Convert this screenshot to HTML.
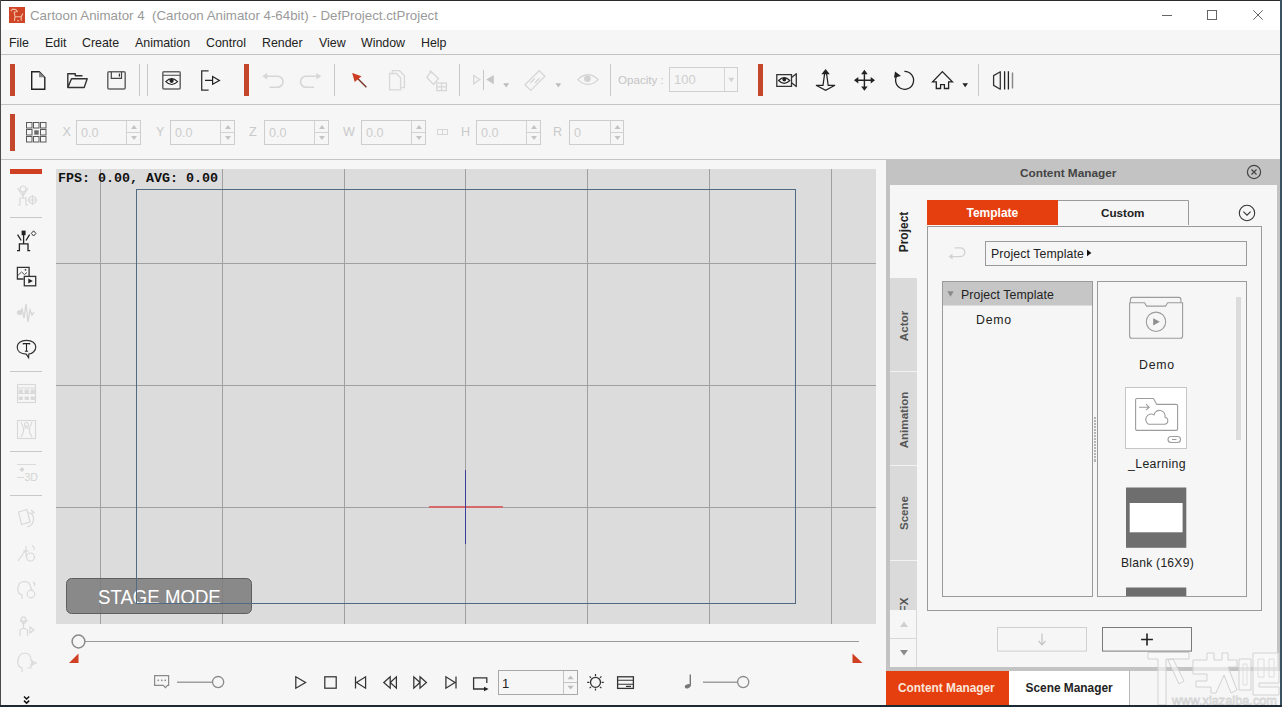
<!DOCTYPE html>
<html><head><meta charset="utf-8">
<style>
*{margin:0;padding:0;box-sizing:border-box}
html,body{width:1282px;height:707px;overflow:hidden}
body{position:relative;background:#f6f6f6;font-family:"Liberation Sans",sans-serif;color:#222}
.a{position:absolute}
.t{position:absolute;white-space:nowrap;line-height:1}
svg{position:absolute;overflow:visible}
.red{position:absolute;background:#c4472b}
.vsep{position:absolute;width:1px;background:#c8c8c8}
.inp{position:absolute;border:1px solid #c9c9c9;background:#f6f6f6}
.inp .d{position:absolute;top:0;bottom:0;width:1px;background:#d2d2d2}
.lbl{position:absolute;color:#c8c8c8;font-size:15px;line-height:1}
.val{position:absolute;color:#c8c8c8;font-size:14px;line-height:1}
</style></head><body>

<!-- ===== TITLE BAR ===== -->
<div class="a" style="left:0;top:0;width:1282px;height:30px;background:#fff"></div>
<div class="a" style="left:9px;top:7px;width:16px;height:16px;background:#cf4526"></div>
<svg style="left:0;top:0" width="30" height="30" viewBox="0 0 30 30"><path d="M10.8 11.2L12.6 9.2L15.8 9.6L17.2 11.4L14.2 12.2L15 16.8H21.2L22.8 13.6M15 16.8L14.4 20.8M21.2 16.8V20.8M17 20.8H19" fill="none" stroke="#f6bfa6" stroke-width="1.1"/></svg>
<div class="t" style="left:30px;top:9px;font-size:13.3px;color:#9a9a9a">Cartoon Animator 4&nbsp; (Cartoon Animator 4-64bit) - DefProject.ctProject</div>
<!-- window controls -->
<div class="a" style="left:1162px;top:15px;width:10px;height:1px;background:#666"></div>
<div class="a" style="left:1207px;top:10px;width:10px;height:10px;border:1px solid #666"></div>
<svg style="left:1253px;top:10px" width="10" height="10" viewBox="0 0 10 10"><path d="M0.3 0.3L9.7 9.7M9.7 0.3L0.3 9.7" stroke="#666" stroke-width="1"/></svg>

<!-- ===== MENU ===== -->
<div class="a" style="left:0;top:30px;width:1282px;height:24px;background:#f6f6f6"></div>
<div class="t" style="left:9px;top:37px;font-size:12.4px;color:#222">File</div>
<div class="t" style="left:45px;top:37px;font-size:12.4px;color:#222">Edit</div>
<div class="t" style="left:82px;top:37px;font-size:12.4px;color:#222">Create</div>
<div class="t" style="left:135px;top:37px;font-size:12.4px;color:#222">Animation</div>
<div class="t" style="left:206px;top:37px;font-size:12.4px;color:#222">Control</div>
<div class="t" style="left:262px;top:37px;font-size:12.4px;color:#222">Render</div>
<div class="t" style="left:319px;top:37px;font-size:12.4px;color:#222">View</div>
<div class="t" style="left:361px;top:37px;font-size:12.4px;color:#222">Window</div>
<div class="t" style="left:421px;top:37px;font-size:12.4px;color:#222">Help</div>
<div class="a" style="left:0;top:54px;width:1282px;height:1px;background:#c4c4c4"></div>

<!-- ===== TOOLBAR 1 ===== -->
<div id="tb1"><svg style="left:0;top:0" width="1282" height="160" viewBox="0 0 1282 160">
<g fill="#c4472b">
<rect x="10" y="64" width="5" height="32"/><rect x="244" y="64" width="5" height="32"/><rect x="758" y="64" width="5" height="32"/>
<rect x="10" y="114" width="5" height="37"/>
</g>
<g fill="#c8c8c8">
<rect x="139" y="64" width="1" height="32"/><rect x="147" y="64" width="1" height="32"/><rect x="334" y="64" width="1" height="32"/>
<rect x="459" y="64" width="1" height="32"/><rect x="610" y="64" width="1" height="32"/><rect x="978" y="64" width="1" height="32"/>
</g>
<!-- new doc -->
<path d="M31.7 71.7H39.2L44.8 77.6V89.3H31.7Z" fill="none" stroke="#222" stroke-width="1.4" stroke-linejoin="miter"/>
<path d="M39 71.7V77.3H44.8Z" fill="#888"/>
<!-- open folder -->
<path d="M71.5 78.8H87.2L84.2 87.5H67.8L71.5 78.8ZM67.8 87.5V73.8H75.3V75.8H82.5" fill="none" stroke="#333" stroke-width="1.4" stroke-linejoin="round"/>
<!-- save -->
<rect x="107.8" y="71.8" width="17.4" height="17.2" rx="1.2" fill="none" stroke="#666" stroke-width="1.5"/>
<path d="M111.3 71.8V78.3H121.5V71.8" fill="none" stroke="#444" stroke-width="1.2"/>
<rect x="118.8" y="73.6" width="1.2" height="3" fill="#333"/>
<!-- preview -->
<rect x="162.8" y="71.8" width="17.4" height="17.3" rx="1" fill="none" stroke="#666" stroke-width="1.5"/>
<line x1="162.8" y1="75.3" x2="180.2" y2="75.3" stroke="#555" stroke-width="1.1"/>
<path d="M165.8 81.6Q171.6 75.8 177.6 81.6Q171.6 87.4 165.8 81.6Z" fill="none" stroke="#222" stroke-width="1.1"/>
<circle cx="171.6" cy="80.8" r="2.1" fill="#222"/>
<!-- export -->
<path d="M208.6 70.8H201.7V90.2H208.6" fill="none" stroke="#333" stroke-width="1.3"/>
<path d="M205 80.4H212.6M212.6 76.6L219.4 80.4L212.6 84.2Z" fill="none" stroke="#222" stroke-width="1.2" stroke-linejoin="miter"/>
<!-- undo / redo -->
<g fill="none" stroke="#d6d6d6" stroke-width="1.6">
<path d="M264 76.2H277.5A5.5 5.5 0 0 1 277.5 87.2H269.5"/>
<path d="M319.5 76.2H306A5.5 5.5 0 0 0 306 87.2H314"/>
</g>
<path d="M262.3 76.2L267.2 73V79.4Z" fill="#d6d6d6"/>
<path d="M321.3 76.2L316.4 73V79.4Z" fill="#d6d6d6"/>
<!-- select arrow -->
<path d="M353.2 74L366.4 87.2" stroke="#7a3a2e" stroke-width="1.5"/>
<path d="M352.2 73.1L361.5 76.3L354.7 82Z" fill="#cc3d24"/>
<!-- copy (disabled) -->
<g fill="none" stroke="#d8d8d8" stroke-width="1.3">
<path d="M392.4 72.7V70.7H399.5L404.4 75.6V87.6H401.3"/>
<path d="M389.6 73.5H396.4L400.6 77.8V89.9H389.6Z"/>
</g>
<!-- paint bucket (disabled) -->
<g fill="none" stroke="#d6d6d6" stroke-width="1.3">
<path d="M431 71.5L438.5 78.5L433.5 84.5L426.8 77.5Z"/>
<path d="M429.5 70.5 L432 73"/>
<rect x="436.8" y="83" width="9.6" height="7.6"/>
<path d="M441.6 83V90.6M436.8 86.8H446.4"/>
</g>
<!-- mirror (disabled) -->
<path d="M473.7 75.4L479.8 79.6L473.7 83.8Z" fill="none" stroke="#d4d4d4" stroke-width="1.2"/>
<rect x="483" y="70" width="1" height="20.2" fill="#c6c6c6"/>
<path d="M493.8 74.9V84.3L486.2 79.6Z" fill="#c6c6c6"/>
<path d="M503.2 83.2H509.2L506.2 87.6Z" fill="#bdbdbd"/>
<!-- link (disabled) -->
<g fill="none" stroke="#d4d4d4" stroke-width="1.2" transform="rotate(-45 535 80.6)">
<rect x="525" y="76.6" width="20" height="8"/>
<path d="M530 79H536.5M533.5 82.2H540"/>
</g>
<path d="M555.5 83.2H561.2L558.35 87.6Z" fill="#bdbdbd"/>
<!-- eye (disabled) -->
<path d="M577.8 79.6Q588 70 598.2 79.6Q588 89.2 577.8 79.6Z" fill="none" stroke="#d6d6d6" stroke-width="1.3"/>
<circle cx="587.4" cy="78.8" r="3.3" fill="#d2d2d2"/>
<!-- opacity input -->
<rect x="669.5" y="67.5" width="68" height="24" fill="none" stroke="#cfcfcf" stroke-width="1"/>
<rect x="724" y="68" width="1" height="23" fill="#d4d4d4"/>
<path d="M728.3 77.8H734.3L731.3 82.2Z" fill="#d2d2d2"/>
<!-- camera eye -->
<path d="M776.8 74.6H791.5V86.3H776.8Z" fill="none" stroke="#333" stroke-width="1.3"/>
<path d="M791.5 77.6L796.3 73.7V86.6L791.5 82.7" fill="none" stroke="#333" stroke-width="1.3" stroke-linejoin="round"/>
<path d="M778.6 80.5Q784.2 74.8 789.8 80.5Q784.2 86.2 778.6 80.5Z" fill="none" stroke="#222" stroke-width="1.1"/>
<circle cx="784.3" cy="79.5" r="1.9" fill="#222"/>
<!-- y arrow -->
<path d="M825.6 69L829.8 74.2H821.4Z" fill="#222"/>
<path d="M824.6 73.8L823 85.3H816L825.6 90.4L835 85.3H828.2L826.6 73.8" fill="none" stroke="#222" stroke-width="1.2" stroke-linejoin="miter"/>
<!-- move -->
<path d="M855.5 80.3H873.5M864.4 71.5V89.2" stroke="#222" stroke-width="1.4"/>
<path d="M854 80.3L858.3 77V83.6Z M875 80.3L870.7 77V83.6Z M864.4 69.8L861.1 74.2H867.7Z M864.4 90.8L861.1 86.4H867.7Z" fill="#222"/>
<!-- rotate -->
<path d="M897.9 74.3A9 9 0 1 0 904.4 71.3" fill="none" stroke="#222" stroke-width="1.3"/>
<path d="M894 77.8L895 71.6L901 76Z" fill="#222"/>
<!-- home -->
<path d="M942.4 71.6L952.4 81.8H948.6V88.5H944.4V84.6H940.6V88.5H936.3V81.8H932.6Z" fill="none" stroke="#222" stroke-width="1.3" stroke-linejoin="miter"/>
<path d="M962.4 83.2H968L965.2 87.2Z" fill="#222"/>
<!-- ambient -->
<path d="M1000.3 71.8V89.2L993.6 85.4V75.6Z" fill="none" stroke="#333" stroke-width="1.3" stroke-linejoin="round"/>
<path d="M1004.6 71.3V89.6M1008.4 71.3V89.6" stroke="#222" stroke-width="1.3"/>
<path d="M1012.5 72.5V88.5" stroke="#888" stroke-width="1.5"/>
</svg>
<div class="t" style="left:618px;top:74px;font-size:11.6px;color:#c4c4c4">Opacity :</div>
<div class="t" style="left:674px;top:73px;font-size:13px;color:#cfcfcf">100</div>
</div>
<div class="a" style="left:0;top:104px;width:1282px;height:1px;background:#c4c4c4"></div>

<!-- ===== TOOLBAR 2 ===== -->
<div id="tb2"><svg style="left:0;top:0" width="1282" height="160" viewBox="0 0 1282 160">
<rect x="26.5" y="122.5" width="5.5" height="5.5" fill="none" stroke="#5a5a5a" stroke-width="1"/>
<rect x="33.5" y="122.5" width="5.5" height="5.5" fill="none" stroke="#5a5a5a" stroke-width="1"/>
<rect x="40.5" y="122.5" width="5.5" height="5.5" fill="none" stroke="#5a5a5a" stroke-width="1"/>
<rect x="26.5" y="129.5" width="5.5" height="5.5" fill="none" stroke="#5a5a5a" stroke-width="1"/>
<rect x="34.3" y="130.3" width="4.4" height="4.4" fill="#6a6a6a"/>
<rect x="40.5" y="129.5" width="5.5" height="5.5" fill="none" stroke="#5a5a5a" stroke-width="1"/>
<rect x="26.5" y="136.5" width="5.5" height="5.5" fill="none" stroke="#5a5a5a" stroke-width="1"/>
<rect x="33.5" y="136.5" width="5.5" height="5.5" fill="none" stroke="#5a5a5a" stroke-width="1"/>
<rect x="40.5" y="136.5" width="5.5" height="5.5" fill="none" stroke="#5a5a5a" stroke-width="1"/>
<rect x="76.5" y="120.5" width="64" height="24" fill="none" stroke="#cdcdcd" stroke-width="1"/>
<rect x="126" y="121" width="1" height="23" fill="#d2d2d2"/>
<rect x="127" y="132" width="13" height="1" fill="#d2d2d2"/>
<path d="M131.0 129H137.0L134.0 125Z" fill="#c4c4c4"/>
<path d="M131.0 136H137.0L134.0 140Z" fill="#c4c4c4"/>
<rect x="170.5" y="120.5" width="64" height="24" fill="none" stroke="#cdcdcd" stroke-width="1"/>
<rect x="220" y="121" width="1" height="23" fill="#d2d2d2"/>
<rect x="221" y="132" width="13" height="1" fill="#d2d2d2"/>
<path d="M225.0 129H231.0L228.0 125Z" fill="#c4c4c4"/>
<path d="M225.0 136H231.0L228.0 140Z" fill="#c4c4c4"/>
<rect x="264.5" y="120.5" width="64" height="24" fill="none" stroke="#cdcdcd" stroke-width="1"/>
<rect x="314" y="121" width="1" height="23" fill="#d2d2d2"/>
<rect x="315" y="132" width="13" height="1" fill="#d2d2d2"/>
<path d="M319.0 129H325.0L322.0 125Z" fill="#c4c4c4"/>
<path d="M319.0 136H325.0L322.0 140Z" fill="#c4c4c4"/>
<rect x="361.5" y="120.5" width="64" height="24" fill="none" stroke="#cdcdcd" stroke-width="1"/>
<rect x="411" y="121" width="1" height="23" fill="#d2d2d2"/>
<rect x="412" y="132" width="13" height="1" fill="#d2d2d2"/>
<path d="M416.0 129H422.0L419.0 125Z" fill="#c4c4c4"/>
<path d="M416.0 136H422.0L419.0 140Z" fill="#c4c4c4"/>
<rect x="476.5" y="120.5" width="64" height="24" fill="none" stroke="#cdcdcd" stroke-width="1"/>
<rect x="526" y="121" width="1" height="23" fill="#d2d2d2"/>
<rect x="527" y="132" width="13" height="1" fill="#d2d2d2"/>
<path d="M531.0 129H537.0L534.0 125Z" fill="#c4c4c4"/>
<path d="M531.0 136H537.0L534.0 140Z" fill="#c4c4c4"/>
<rect x="569.5" y="120.5" width="54" height="24" fill="none" stroke="#cdcdcd" stroke-width="1"/>
<rect x="610" y="121" width="1" height="23" fill="#d2d2d2"/>
<rect x="611" y="132" width="12" height="1" fill="#d2d2d2"/>
<path d="M614.5 129H620.5L617.5 125Z" fill="#c4c4c4"/>
<path d="M614.5 136H620.5L617.5 140Z" fill="#c4c4c4"/>
<g fill="none" stroke="#d6d6d6" stroke-width="1"><rect x="437.5" y="129.5" width="5" height="5"/><rect x="442.5" y="129.5" width="5" height="5"/></g>
</svg>
<div class="t" style="left:62.5px;top:126px;font-size:12.6px;color:#c9c9c9">X</div>
<div class="t" style="left:81px;top:126.5px;font-size:12.6px;color:#cdcdcd">0.0</div>
<div class="t" style="left:156px;top:126px;font-size:12.6px;color:#c9c9c9">Y</div>
<div class="t" style="left:175px;top:126.5px;font-size:12.6px;color:#cdcdcd">0.0</div>
<div class="t" style="left:249px;top:126px;font-size:12.6px;color:#c9c9c9">Z</div>
<div class="t" style="left:269px;top:126.5px;font-size:12.6px;color:#cdcdcd">0.0</div>
<div class="t" style="left:343px;top:126px;font-size:12.6px;color:#c9c9c9">W</div>
<div class="t" style="left:366px;top:126.5px;font-size:12.6px;color:#cdcdcd">0.0</div>
<div class="t" style="left:461px;top:126px;font-size:12.6px;color:#c9c9c9">H</div>
<div class="t" style="left:481px;top:126.5px;font-size:12.6px;color:#cdcdcd">0.0</div>
<div class="t" style="left:553px;top:126px;font-size:12.6px;color:#c9c9c9">R</div>
<div class="t" style="left:574px;top:126.5px;font-size:12.6px;color:#cdcdcd">0</div></div>
<div class="a" style="left:0;top:159px;width:1282px;height:1px;background:#c4c4c4"></div>

<!-- ===== LEFT SIDEBAR ===== -->
<div id="side"><svg style="left:0;top:0" width="56" height="707" viewBox="0 0 56 707">
<rect x="10" y="169" width="32" height="5" fill="#cf3f22"/>
<g fill="#c8c8c8"><rect x="10" y="217" width="32" height="1"/><rect x="10" y="371" width="32" height="1"/><rect x="10" y="451" width="32" height="1"/><rect x="10" y="495" width="32" height="1"/></g>
<!-- faded actor group -->
<g fill="none" stroke="#d9d9d9" stroke-width="1.2">
<circle cx="23" cy="189" r="3"/><path d="M17.5 188L23 196L28 188M23 192V198M18 205H20V198H26V205H28"/>
<circle cx="32.5" cy="200" r="3.5"/><path d="M32.5 195V205M27.5 200H37.5"/>
</g>
<!-- actor -->
<rect x="21.6" y="230.6" width="4" height="4.6" fill="#222"/>
<path d="M23.6 235V243.8M17.6 234.6L21.2 240.5M29.6 234.6L26 240.5M17 250.6H19.4V243.8H28V250.6H30.2" fill="none" stroke="#222" stroke-width="1.3"/>
<path d="M33.6 230.8L35.9 233.4L33.6 236L31.3 233.4Z" fill="none" stroke="#333" stroke-width="1"/>
<!-- media -->
<path d="M23.6 279H17.4V267.4H29.1V276" fill="none" stroke="#333" stroke-width="1.3"/>
<path d="M17.8 275.5L21.5 272L24.5 274.5L27 272.5" fill="none" stroke="#555" stroke-width="1"/>
<circle cx="25.5" cy="269.8" r="0.9" fill="#444"/>
<rect x="24.3" y="276.4" width="11.4" height="9.4" fill="none" stroke="#333" stroke-width="1.3"/>
<path d="M28.3 278.5L32.8 281L28.3 283.6Z" fill="#222"/>
<!-- audio faded -->
<g fill="none" stroke="#d6d6d6" stroke-width="1.3">
<path d="M20 313L22 309L24 318L26 304L28 322L30 310L32 315L34 312"/>
</g>
<circle cx="19.5" cy="312.5" r="2.6" fill="#d8d8d8"/>
<!-- T bubble -->
<path d="M26.5 340.4C32.2 340.4 35.8 343.3 35.8 347.1C35.8 350.6 32.6 353.6 28.8 354L28.6 357.6L26.2 354.1C20.5 354 17.2 351 17.2 347.1C17.2 343.3 20.8 340.4 26.5 340.4Z" fill="none" stroke="#333" stroke-width="1.2"/>
<path d="M23.3 344.4V343.6H29.7V344.4M26.5 343.6V351.2M24.9 351.2H28.1" fill="none" stroke="#222" stroke-width="1.1"/>
<!-- film faded -->
<g fill="none" stroke="#d8d8d8" stroke-width="1.1">
<rect x="17.5" y="384.5" width="18" height="18"/>
<path d="M17.5 388H35.5M17.5 393.5H35.5"/>
</g>
<g fill="#d9d9d9"><rect x="18.5" y="389.5" width="4.5" height="3.5" rx="1"/><rect x="24.5" y="389.5" width="4.5" height="3.5" rx="1"/><rect x="30.5" y="389.5" width="4.5" height="3.5" rx="1"/>
<rect x="18.5" y="396.5" width="4.5" height="3.5" rx="1"/><rect x="24.5" y="396.5" width="4.5" height="3.5" rx="1"/><rect x="30.5" y="396.5" width="4.5" height="3.5" rx="1"/></g>
<!-- sprite faded -->
<g fill="none" stroke="#d8d8d8" stroke-width="1.1">
<rect x="17.5" y="420.5" width="18" height="18"/>
<path d="M21 422L23.5 428V432L21 437M32 422L29.5 428V432L32 437M23.5 428H29.5"/>
<circle cx="26.5" cy="424.5" r="2"/>
</g>
<!-- 3D faded -->
<g fill="none" stroke="#dadada" stroke-width="1">
<path d="M17 464.5H36M17 477.5H24"/>
</g>
<path d="M22 467L24.5 469.5L22 472L19.5 469.5Z" fill="#d4d4d4"/>
<text x="24.5" y="481" font-family="Liberation Sans" font-size="10.5" fill="#d4d4d4">3D</text>
<!-- faded icons -->
<g fill="none" stroke="#d9d9d9" stroke-width="1.2">
<path d="M18.5 512L27 509.5L30 522L21.5 524.5Z"/><path d="M28 512.5Q34 513 33.5 520Q33 525.5 27 527"/><path d="M31 510L34 512.5L30.5 514"/>
<path d="M18 561L26.5 549M26 546V556M23 551L29 551"/><circle cx="30.5" cy="557" r="4"/><path d="M32 545.5Q35 547 34 550"/>
<path d="M22 599V595Q17 594 18 587Q19 581.5 25 581.5Q30 582 30.5 587L32 590"/><circle cx="31" cy="594" r="3.8"/><path d="M33 582Q35.5 583 34.5 586"/>
<path d="M20 636V630L23.5 628V622M20 620L23.5 624L27.5 620M27.5 636V630L23.5 628"/><circle cx="23.5" cy="619" r="2.2"/><path d="M30 627L34 630L30 633Z"/>
<path d="M22 672V668Q17 667 18 660Q19 653 25 653Q31 653.5 31 660L33 663L31 664V668H27"/><path d="M32 661L36 663L32 665Z"/>
</g>
<!-- chevron -->
<path d="M24 696.5L26.6 699L29.2 696.5M24 700.6L26.6 703.1L29.2 700.6" fill="none" stroke="#111" stroke-width="1.5"/>
</svg>
</div>

<!-- ===== STAGE ===== -->
<div id="stage"><div class="a" style="left:56px;top:169px;width:820px;height:455px;background:#dcdcdc;overflow:hidden">
<svg style="left:0;top:0" width="820" height="455" viewBox="56 169 820 455">
<g fill="#a0a0a0">
<rect x="100" y="169" width="1" height="455"/><rect x="222" y="169" width="1" height="455"/><rect x="344" y="169" width="1" height="455"/>
<rect x="465" y="169" width="1" height="455"/><rect x="587" y="169" width="1" height="455"/><rect x="709" y="169" width="1" height="455"/><rect x="831" y="169" width="1" height="455"/>
<rect x="56" y="263" width="820" height="1"/><rect x="56" y="385" width="820" height="1"/><rect x="56" y="507" width="820" height="1"/>
</g>
<rect x="66.5" y="578.5" width="185" height="35" rx="5" fill="#7a7a7a" fill-opacity="0.85" stroke="#5e5e5e" stroke-width="1"/>
</svg>
<div class="t" style="left:2px;top:3px;font-family:'Liberation Mono',monospace;font-weight:bold;font-size:13.33px;color:#111">FPS: 0.00, AVG: 0.00</div>
<div class="t" style="left:42px;top:419px;font-size:19.5px;color:#fff;transform:scaleX(0.955);transform-origin:0 0">STAGE MODE</div>
<svg style="left:0;top:0" width="820" height="455" viewBox="56 169 820 455">
<rect x="136.5" y="189.5" width="659" height="414" fill="none" stroke="#4f6a82" stroke-width="1"/>
<rect x="429" y="506" width="74" height="2" fill="#d46a6a"/>
<rect x="465" y="470" width="1" height="74" fill="#3b3f96"/>
</svg>
</div>
</div>

<!-- ===== TIMELINE ===== -->
<div id="timeline"><svg style="left:0;top:0" width="886" height="707" viewBox="0 0 886 707">
<rect x="85" y="641" width="774" height="1" fill="#9a9a9a"/>
<circle cx="78.5" cy="641.5" r="6.4" fill="#f6f6f6" stroke="#8a8a8a" stroke-width="1.5"/>
<path d="M69 663H78.5V653.5Z" fill="#cf3f22"/>
<path d="M852.5 653.5V663H862.5Z" fill="#cf3f22"/>
<!-- speech -->
<path d="M154.6 675.6H168.6V685.3H167.5L165.4 687.6L163.3 685.3H154.6Z" fill="none" stroke="#8a8a8a" stroke-width="1.2"/>
<g fill="#8a8a8a"><rect x="157.5" y="679.6" width="1.5" height="1.5"/><rect x="161" y="679.6" width="1.5" height="1.5"/><rect x="164.5" y="679.6" width="1.5" height="1.5"/></g>
<rect x="177" y="681.6" width="35" height="1.2" fill="#8a8a8a"/>
<circle cx="218.1" cy="682.1" r="5.6" fill="#f6f6f6" stroke="#8a8a8a" stroke-width="1.3"/>
<!-- transport -->
<g fill="none" stroke="#333" stroke-width="1.25" stroke-linejoin="miter">
<path d="M295.8 676.8V688.2L305.6 682.5Z"/>
<rect x="324.8" y="676.8" width="11.4" height="11.4"/>
<path d="M355.5 676.4V688.6M365.6 676.8V688.2L356.5 682.5Z"/>
<path d="M390.2 676.8L383.8 682.5L390.2 688.2V682.5L396.4 688.2V676.8L390.2 682.5Z"/>
<path d="M420 676.8L426.4 682.5L420 688.2V682.5L413.8 688.2V676.8L420 682.5Z"/>
<path d="M456 676.4V688.6M445.9 676.8V688.2L455 682.5Z"/>
</g>
<!-- loop -->
<path d="M486.8 683V677.8H473.6V689H484" fill="none" stroke="#333" stroke-width="1.3"/>
<path d="M484 686.8L488.6 689L484 691.2Z" fill="#222"/>
<!-- frame input -->
<rect x="498.5" y="670.5" width="79" height="24" fill="#f6f6f6" stroke="#a8a8a8" stroke-width="1"/>
<rect x="563" y="671" width="1" height="23" fill="#c4c4c4"/>
<rect x="564" y="682" width="13" height="1" fill="#c4c4c4"/>
<path d="M567.5 679.2H573.7L570.6 675.4Z" fill="#bdbdbd"/>
<path d="M567.5 685.8H573.7L570.6 689.6Z" fill="#bdbdbd"/>
<!-- sun -->
<circle cx="595.5" cy="682.3" r="5" fill="none" stroke="#333" stroke-width="1.3"/>
<g stroke="#333" stroke-width="1.2">
<path d="M595.5 674V676.2M595.5 688.4V690.6M587.2 682.3H589.4M601.6 682.3H603.8M589.6 676.4L591 677.8M600 686.8L601.4 688.2M601.4 676.4L600 677.8M591 686.8L589.6 688.2"/>
</g>
<!-- panel -->
<rect x="617.6" y="676.8" width="15.8" height="11.6" fill="none" stroke="#333" stroke-width="1.3"/>
<path d="M617.6 680.2H633.4M617.6 684.2H633.4" stroke="#333" stroke-width="1.1"/>
<path d="M626 686.4H631" stroke="#333" stroke-width="1.2"/>
<!-- note -->
<path d="M690.3 674.6V686" stroke="#777" stroke-width="1.4"/>
<ellipse cx="687.6" cy="686.3" rx="2.9" ry="2" fill="#777" transform="rotate(-20 687.6 686.3)"/>
<rect x="703" y="681.6" width="34" height="1.2" fill="#8a8a8a"/>
<circle cx="743.2" cy="682.1" r="5.6" fill="#f6f6f6" stroke="#8a8a8a" stroke-width="1.3"/>
</svg>
<div class="t" style="left:502px;top:677px;font-size:13px;color:#222">1</div>
</div>

<!-- ===== CONTENT MANAGER ===== -->
<div id="cm"><div class="a" style="left:886px;top:160px;width:394px;height:545px;background:#c3c3c3"></div>
<div class="a" style="left:890px;top:185px;width:387px;height:482px;background:#f6f6f6"></div>
<div class="t" style="left:1020px;top:168px;font-size:11.8px;font-weight:bold;color:#444">Content Manager</div>
<svg style="left:0;top:0" width="1282" height="707" viewBox="0 0 1282 707">
<circle cx="1254" cy="172" r="6.6" fill="none" stroke="#444" stroke-width="1.2"/>
<path d="M1251.5 169.5L1256.5 174.5M1256.5 169.5L1251.5 174.5" stroke="#444" stroke-width="1.2"/>
<!-- vertical tabs -->
<rect x="890" y="278" width="27" height="332" fill="#dadada"/>
<g fill="#f2f2f2"><rect x="890" y="371" width="27" height="1"/><rect x="890" y="465" width="27" height="1"/><rect x="890" y="560" width="27" height="1"/></g>
<rect x="890" y="610" width="27" height="57" fill="#f6f6f6"/>
<rect x="916" y="610" width="1" height="57" fill="#d8d8d8"/>
<rect x="890" y="638" width="27" height="1" fill="#d8d8d8"/>
<path d="M900 627H908L904 621.5Z" fill="#cfcfcf"/>
<path d="M900 650H908L904 655.5Z" fill="#8a8a8a"/>
<!-- template / custom tabs -->
<rect x="927" y="200" width="131" height="25" fill="#e63f0f"/>
<path d="M1058 200.5H1188.5V225" fill="none" stroke="#9a9a9a" stroke-width="1"/>
<rect x="927.5" y="226.5" width="334" height="384" fill="none" stroke="#9a9a9a" stroke-width="1"/>
<circle cx="1247" cy="213" r="7.7" fill="none" stroke="#333" stroke-width="1.1"/>
<path d="M1243.4 211.6L1247 215.2L1250.6 211.6" fill="none" stroke="#333" stroke-width="1.1"/>
<!-- back arrow -->
<path d="M950 256.6H960.5A4.35 4.35 0 0 0 960.5 247.9H954.5" fill="none" stroke="#d2d2d2" stroke-width="1.4"/>
<path d="M948.5 256.6L952.5 253.8V259.4Z" fill="#d2d2d2"/>
<!-- breadcrumb -->
<rect x="985.5" y="241.5" width="261" height="24" fill="#f6f6f6" stroke="#9a9a9a" stroke-width="1"/>
<path d="M1087 249.6V256.2L1091.4 252.9Z" fill="#111"/>
<!-- tree -->
<rect x="942.5" y="281.5" width="150" height="315" fill="#f6f6f6" stroke="#9a9a9a" stroke-width="1"/>
<rect x="943" y="282" width="149" height="23.5" fill="#c6c6c6"/>
<path d="M947.3 291.2H953.7L950.5 296.8Z" fill="#8a8a8a"/>
<!-- grid -->
<rect x="1097.5" y="281.5" width="149" height="315" fill="#f6f6f6" stroke="#9a9a9a" stroke-width="1"/>
<rect x="1236" y="297" width="5" height="143" fill="#dcdcdc"/>
<g fill="#9a9a9a"><rect x="1094" y="417" width="2" height="45" fill="#b4b4b4"/></g>
<g fill="#f6f6f6"><rect x="1094" y="419" width="2" height="1"/><rect x="1094" y="422" width="2" height="1"/><rect x="1094" y="425" width="2" height="1"/><rect x="1094" y="428" width="2" height="1"/><rect x="1094" y="431" width="2" height="1"/><rect x="1094" y="434" width="2" height="1"/><rect x="1094" y="437" width="2" height="1"/><rect x="1094" y="440" width="2" height="1"/><rect x="1094" y="443" width="2" height="1"/><rect x="1094" y="446" width="2" height="1"/><rect x="1094" y="449" width="2" height="1"/><rect x="1094" y="452" width="2" height="1"/><rect x="1094" y="455" width="2" height="1"/><rect x="1094" y="458" width="2" height="1"/></g>
<!-- demo folder -->
<g fill="none" stroke="#9c9c9c" stroke-width="1.1">
<path d="M1130.4 302.5V299.5Q1130.4 297.4 1132.5 297.4H1178.8Q1180.9 297.4 1180.9 299.5V302.5"/>
<path d="M1129.6 302.7H1144.6L1146.6 306.1H1165.6L1167.6 302.7H1182.6V336Q1182.6 338.3 1180.3 338.3H1131.9Q1129.6 338.3 1129.6 336Z"/>
<circle cx="1156" cy="321.8" r="9.7"/>
</g>
<path d="M1153.2 318.2L1159.8 321.8L1153.2 325.4Z" fill="#8e8e8e"/>
<!-- learning -->
<rect x="1125.5" y="387.5" width="61" height="61" fill="#fff" stroke="#c6c6c6" stroke-width="1"/>
<g fill="none" stroke="#9c9c9c" stroke-width="1.1">
<path d="M1135.6 399.8Q1135.6 398.5 1136.9 398.5H1153.4L1156.8 404.4H1176.3Q1177.6 404.4 1177.6 405.7V429.1Q1177.6 430.4 1176.3 430.4H1136.9Q1135.6 430.4 1135.6 429.1Z"/>
<path d="M1139 407.2H1149M1146 404.2L1149.2 407.2L1146 410.2"/>
<path d="M1148.5 424.3H1164.5A3.6 3.6 0 0 0 1165 417.2A5.6 5.6 0 0 0 1154 414.8A4.6 4.6 0 0 0 1148.5 424.3Z"/>
<rect x="1168" y="436.5" width="12.5" height="6" rx="3"/>
<path d="M1172 439.5H1176.5"/>
</g>
<!-- blank -->
<rect x="1126" y="487.5" width="60.3" height="60.3" fill="#6e6e6e"/>
<rect x="1129.7" y="503" width="52.9" height="29.3" fill="#fff"/>
<rect x="1126" y="587.5" width="60.3" height="8.5" fill="#6e6e6e"/>
<!-- buttons -->
<rect x="997.5" y="627.5" width="89" height="23.6" fill="#f6f6f6" stroke="#d0d0d0" stroke-width="1"/>
<path d="M1042 633.5V644.5M1038.6 641L1042 644.8L1045.4 641" fill="none" stroke="#c4c4c4" stroke-width="1.2"/>
<rect x="1102.5" y="627.5" width="89" height="23.6" fill="#f6f6f6" stroke="#7a7a7a" stroke-width="1"/>
<path d="M1147 633.6V645.4M1141.1 639.5H1152.9" stroke="#222" stroke-width="1.6"/>
<!-- bottom tabs -->
<rect x="886" y="671" width="123" height="34" fill="#e63f0f"/>
<rect x="1009" y="671" width="120" height="34" fill="#fff"/>
<rect x="1129" y="671" width="1" height="34" fill="#b8b8b8"/>
<rect x="1130" y="671" width="150" height="34" fill="#f6f6f6"/>
</svg>
<div class="t" style="left:966.5px;top:207px;font-size:12px;font-weight:bold;color:#fff">Template</div>
<div class="t" style="left:1101px;top:207px;font-size:11.7px;font-weight:bold;color:#222">Custom</div>
<div class="t" style="left:991px;top:248px;font-size:12.3px;letter-spacing:0.1px;color:#222">Project Template</div>
<div class="t" style="left:961px;top:289px;font-size:12.3px;letter-spacing:0.1px;color:#222">Project Template</div>
<div class="t" style="left:976px;top:313.5px;font-size:12.3px;letter-spacing:0.8px;color:#222">Demo</div>
<div class="t" style="left:1139px;top:358.5px;font-size:12.3px;letter-spacing:0.8px;color:#222">Demo</div>
<div class="t" style="left:1128px;top:458px;font-size:12.3px;letter-spacing:0.35px;color:#222">_Learning</div>
<div class="t" style="left:1121px;top:557px;font-size:12.1px;letter-spacing:0.25px;color:#222">Blank (16X9)</div>
<div class="t" style="left:898px;top:683px;font-size:11.85px;font-weight:bold;color:#fbe6da">Content Manager</div>
<div class="t" style="left:1025.5px;top:683px;font-size:11.9px;font-weight:bold;color:#222">Scene Manager</div>
<!-- vertical tab labels -->
<div class="t" style="left:903.8px;top:232px;font-size:12px;font-weight:bold;color:#222;transform:translate(-50%,-50%) rotate(-90deg)">Project</div>
<div class="t" style="left:904px;top:326.2px;font-size:11.7px;font-weight:bold;color:#555;transform:translate(-50%,-50%) rotate(-90deg)">Actor</div>
<div class="t" style="left:904px;top:420.2px;font-size:11.6px;font-weight:bold;color:#555;transform:translate(-50%,-50%) rotate(-90deg)">Animation</div>
<div class="t" style="left:904px;top:513.2px;font-size:11.6px;font-weight:bold;color:#555;transform:translate(-50%,-50%) rotate(-90deg)">Scene</div>
<div class="a" style="left:890px;top:580px;width:27px;height:30px;overflow:hidden"><div class="t" style="left:14px;top:24.5px;font-size:11.6px;font-weight:bold;color:#555;transform:translate(-50%,-50%) rotate(-90deg)">FX</div></div>
</div>

<!-- watermark -->
<svg style="left:0;top:0" width="1282" height="707" viewBox="0 0 1282 707">
<g fill="#fafafa" fill-opacity="0.6" stroke="#d2d2d2" stroke-width="1">
<path d="M1148 652.5H1189V659H1166V705H1158V659H1148Z"/>
<path d="M1168 660L1173 659L1184 681L1179 684Z"/>
<path d="M1193 660H1207V653H1214V660H1222V653H1228V660H1237V667H1228L1237 690L1231 693L1224 675L1216 693H1211V687H1196V681H1207V674H1193Z"/>
<path d="M1239 659H1251V690H1239Z"/>
<path d="M1253 653H1279V683H1259V687H1279V695H1253Z"/>
</g>
<g fill="none" stroke="#d8d8d8" stroke-width="0.8">
<path d="M1243 664H1247V685H1243Z"/>
<path d="M1258 659H1264V677H1258ZM1269 659H1274V677H1269Z"/>
</g>
<text x="1172" y="705" font-family="Liberation Sans" font-size="13.5" fill="#fafafa" stroke="#d4d4d4" stroke-width="0.8" textLength="105" lengthAdjust="spacingAndGlyphs">www.xiazaiba.com</text>
</svg>
<!-- window border -->
<div class="a" style="left:0;top:0;width:1282px;height:1px;background:#2b2b2b"></div>
<div class="a" style="left:0;top:0;width:1px;height:707px;background:#4a4a4a"></div>
<div class="a" style="left:1280px;top:0;width:2px;height:707px;background:#3a5262"></div>
<div class="a" style="left:0;top:705px;width:1282px;height:2px;background:#1e2a33"></div>
</body></html>
